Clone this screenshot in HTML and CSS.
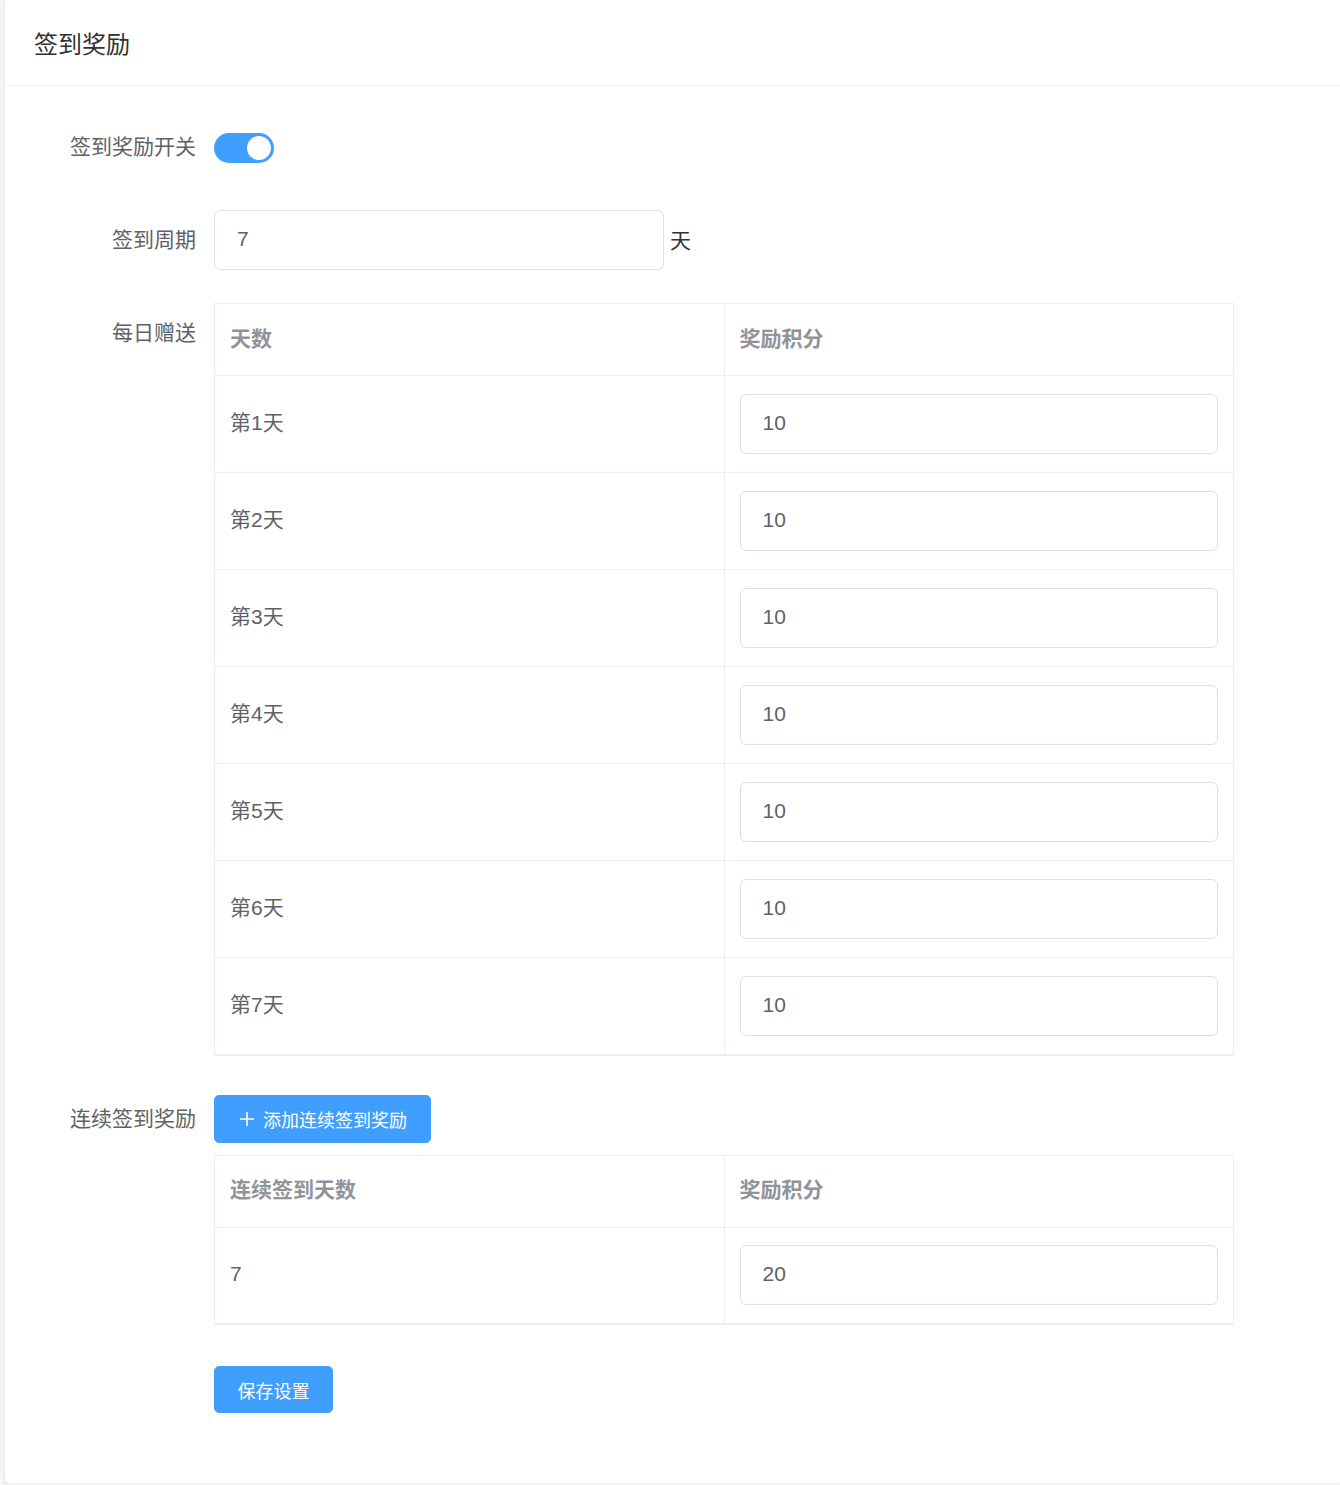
FILE: index.html
```html
<!DOCTYPE html>
<html lang="zh-CN">
<head>
<meta charset="utf-8">
<title>签到奖励</title>
<link rel="stylesheet" href="styles.css">
</head>
<body>
<div class="card">
  <div class="card-header">签到奖励</div>
  <div class="card-body">
    <div class="form-item">
      <label class="form-label">签到奖励开关</label>
      <div class="form-content">
        <span class="switch is-on"><span class="switch-knob"></span></span>
      </div>
    </div>

    <div class="form-item">
      <label class="form-label">签到周期</label>
      <div class="form-content inline">
        <div class="input period"><span>7</span></div>
        <span class="suffix">天</span>
      </div>
    </div>

    <div class="form-item">
      <label class="form-label">每日赠送</label>
      <div class="form-content">
        <table class="table">
          <thead>
            <tr><th>天数</th><th>奖励积分</th></tr>
          </thead>
          <tbody>
            <tr><td>第1天</td><td><div class="input"><span>10</span></div></td></tr>
            <tr><td>第2天</td><td><div class="input"><span>10</span></div></td></tr>
            <tr><td>第3天</td><td><div class="input"><span>10</span></div></td></tr>
            <tr><td>第4天</td><td><div class="input"><span>10</span></div></td></tr>
            <tr><td>第5天</td><td><div class="input"><span>10</span></div></td></tr>
            <tr><td>第6天</td><td><div class="input"><span>10</span></div></td></tr>
            <tr><td>第7天</td><td><div class="input"><span>10</span></div></td></tr>
          </tbody>
        </table>
      </div>
    </div>

    <div class="form-item">
      <label class="form-label btn-label">连续签到奖励</label>
      <div class="form-content">
        <button class="btn add-btn" type="button">
          <svg class="plus" viewBox="0 0 18 18" width="18" height="18"><path d="M9 2v14M2 9h14" stroke="#fff" stroke-width="1.6" fill="none"/></svg>
          <span>添加连续签到奖励</span>
        </button>
        <table class="table">
          <thead>
            <tr><th>连续签到天数</th><th>奖励积分</th></tr>
          </thead>
          <tbody>
            <tr><td>7</td><td><div class="input"><span>20</span></div></td></tr>
          </tbody>
        </table>
      </div>
    </div>

    <div class="form-item last">
      <div class="form-label"></div>
      <div class="form-content">
        <button class="btn save-btn" type="button">保存设置</button>
      </div>
    </div>
  </div>
</div>
</body>
</html>
```

FILE: styles.css
```css
* { box-sizing: border-box; }

html, body {
  margin: 0;
  padding: 0;
  background: #f4f5f7;
  font-family: "Liberation Sans", "Noto Sans CJK SC", sans-serif;
  color: #606266;
  overflow: hidden;
}

.card {
  margin-left: 4px;
  width: 1340px;
  background: #fff;
  border: 1px solid #ebeef5;
  border-top: none;
  border-radius: 0 0 6px 6px;
  box-shadow: 0 3px 3px rgba(0, 0, 0, 0.06);
}

.card-header {
  height: 86px;
  padding: 0 29px;
  display: flex;
  align-items: center;
  font-size: 24px;
  color: #303133;
  border-bottom: 1px solid #ebeef5;
}

.card-body {
  padding: 31px 29px 31px;
}

.form-item {
  display: flex;
  margin-bottom: 33px;
}
.form-item.last { margin-bottom: 34px; }

.form-label {
  flex: 0 0 180px;
  padding-right: 18px;
  text-align: right;
  font-size: 21px;
  line-height: 60px;
  height: 60px;
  color: #606266;
}
.form-label.btn-label {
  line-height: 48px;
  margin-top: 6px;
}

.form-content {
  flex: 0 0 1020px;
  min-height: 60px;
}
.form-content.inline {
  display: flex;
  align-items: center;
}

/* toggle switch */
.switch {
  display: block;
  margin-top: 16px;
  width: 60px;
  height: 30px;
  border-radius: 15px;
  background: #409eff;
  position: relative;
}
.switch-knob {
  position: absolute;
  top: 3px;
  right: 3px;
  width: 24px;
  height: 24px;
  border-radius: 50%;
  background: #fff;
}

/* text input */
.input {
  height: 60px;
  border: 1px solid #dcdfe6;
  border-radius: 6px;
  background: #fff;
  padding: 0 22px 3px;
  display: flex;
  align-items: center;
  font-size: 21px;
  line-height: 1;
  color: #606266;
}
.input.period { width: 450px; }
.suffix {
  margin-left: 6px;
  margin-bottom: 2px;
  font-size: 21px;
  color: #303133;
}

/* data table */
.table {
  width: 1020px;
  border-collapse: collapse;
  table-layout: fixed;
  border: 1px solid #ebeef5;
  border-bottom: 2px solid #ebeef5;
}
.table th, .table td {
  width: 50%;
  border-right: 1px solid #ebeef5;
  border-bottom: 1px solid #ebeef5;
  padding: 0 15px 3px;
  text-align: left;
  font-size: 21px;
  line-height: 1;
}
.table th {
  height: 72px;
  font-weight: bold;
  color: #909399;
}
.table td {
  height: 97px;
  color: #606266;
}
.table td:last-child { padding-bottom: 0; }

/* buttons */
.btn {
  display: flex;
  align-items: center;
  justify-content: center;
  height: 48px;
  padding: 0 22px;
  border: 1px solid #409eff;
  border-radius: 5px;
  background: #409eff;
  color: #fff;
  font-family: inherit;
  font-size: 18px;
  cursor: pointer;
}
.add-btn {
  margin-top: 6px;
  margin-bottom: 12px;
  width: 217px;
}
.add-btn .plus { margin-right: 7px; }
.save-btn {
  margin-top: 8px;
  width: 119px;
  height: 47px;
}
```
